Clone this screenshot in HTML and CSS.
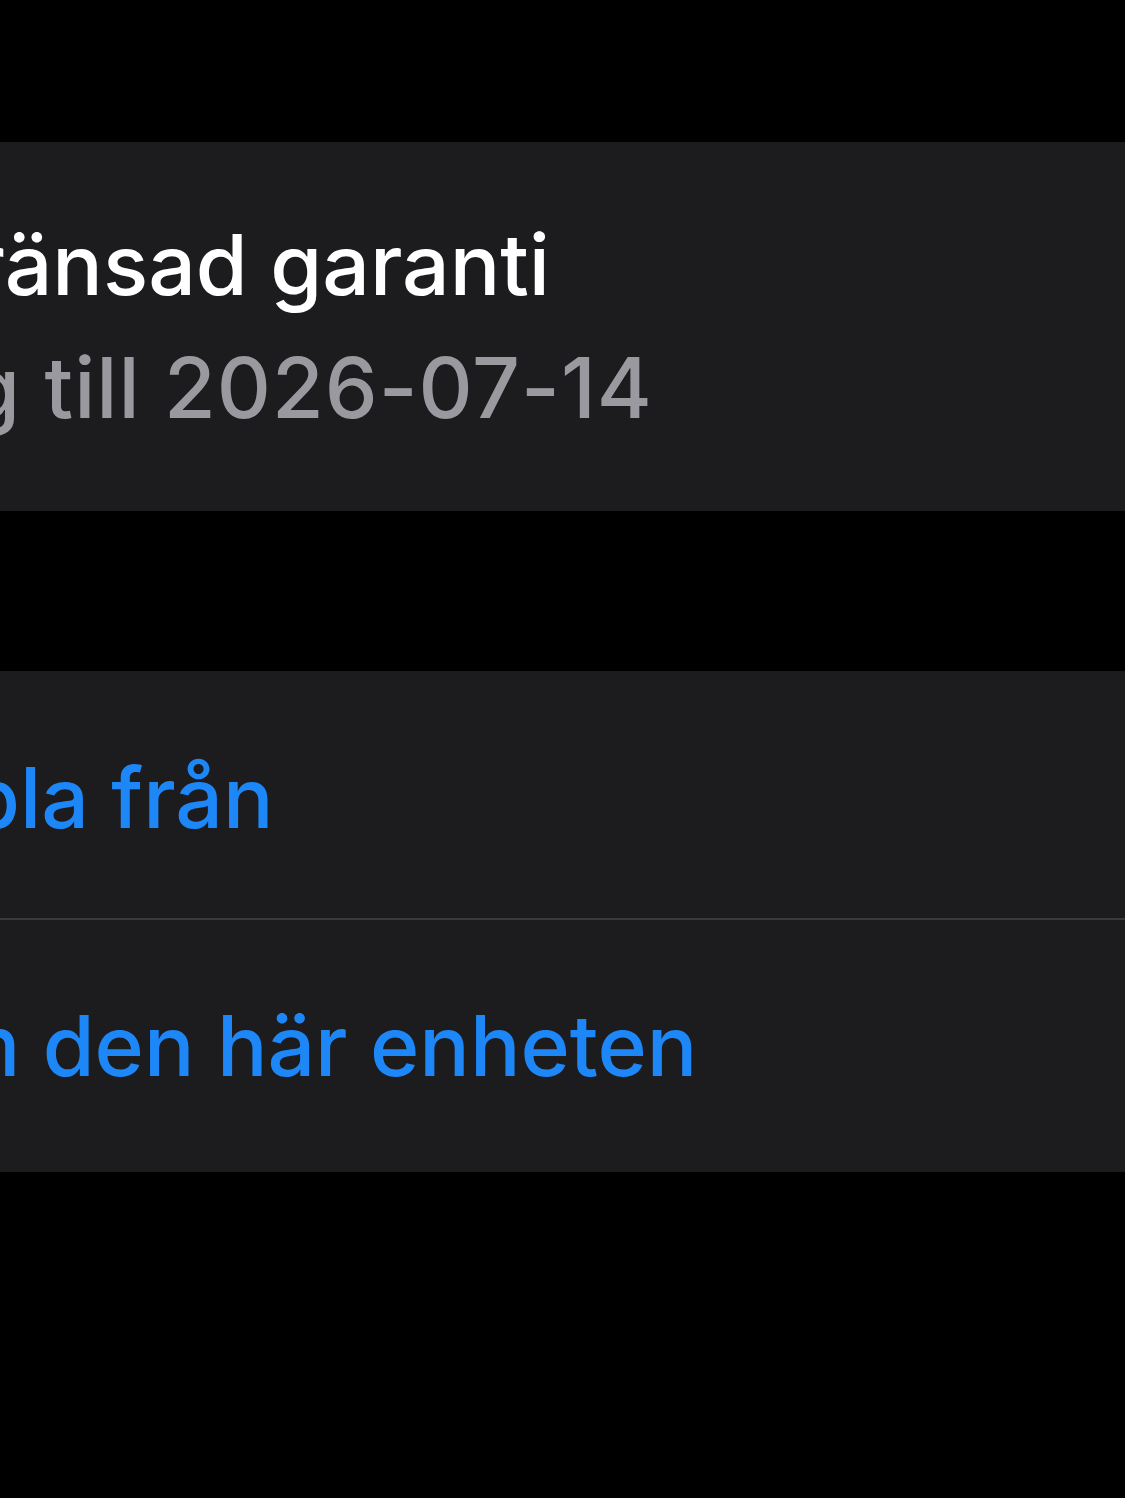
FILE: index.html
```html
<!DOCTYPE html>
<html lang="sv">
<head>
<meta charset="utf-8">
<title>Begränsad garanti</title>
<link rel="stylesheet" href="styles.css">
</head>
<body>
  <main class="screen">
    <section class="group group-warranty">
      <div class="cell cell-info">
        <div class="line title"><span class="txt">Begränsad garanti</span></div>
        <div class="line subtitle"><span class="txt">Giltig till 2026-07-14</span></div>
      </div>
    </section>
    <section class="group group-actions">
      <div class="cell cell-action first">
        <div class="line action"><span class="txt">Koppla från</span></div>
      </div>
      <div class="cell cell-action second">
        <div class="line action"><span class="txt">Glöm den här enheten</span></div>
      </div>
    </section>
  </main>
</body>
</html>
```
FILE: styles.css
```css
html, body {
  margin: 0;
  padding: 0;
  background: #000;
}
body {
  width: 1125px;
  height: 1498px;
  overflow: hidden;
  font-family: Inter, "Noto Sans", "Liberation Sans", sans-serif;
  font-weight: 500;
  font-size: 84px;
  -webkit-font-smoothing: antialiased;
}
.screen {
  display: flex;
  flex-direction: column;
  padding-top: 142px;
  gap: 160px;
}
.group {
  background: #1c1c1e;
  display: flex;
  flex-direction: column;
}
.line {
  line-height: 123px;
  white-space: nowrap;
  overflow: visible;
}
.txt {
  display: inline-block;
  margin-left: -184px;
}
.cell-info {
  padding: 61px 0 62px;
}
.title { color: #ffffff; }
.subtitle { color: #9a999f; }
.subtitle .txt {
  letter-spacing: 1px;
  margin-left: -193px;
}
.action { color: #1d87f8; }
.action .txt {
  margin-left: -189px;
}
.cell-action.first {
  padding: 65px 0 59px;
}
.cell-action.second {
  border-top: 2px solid #3a3a3d;
  padding: 64px 0 65px;
}
```
